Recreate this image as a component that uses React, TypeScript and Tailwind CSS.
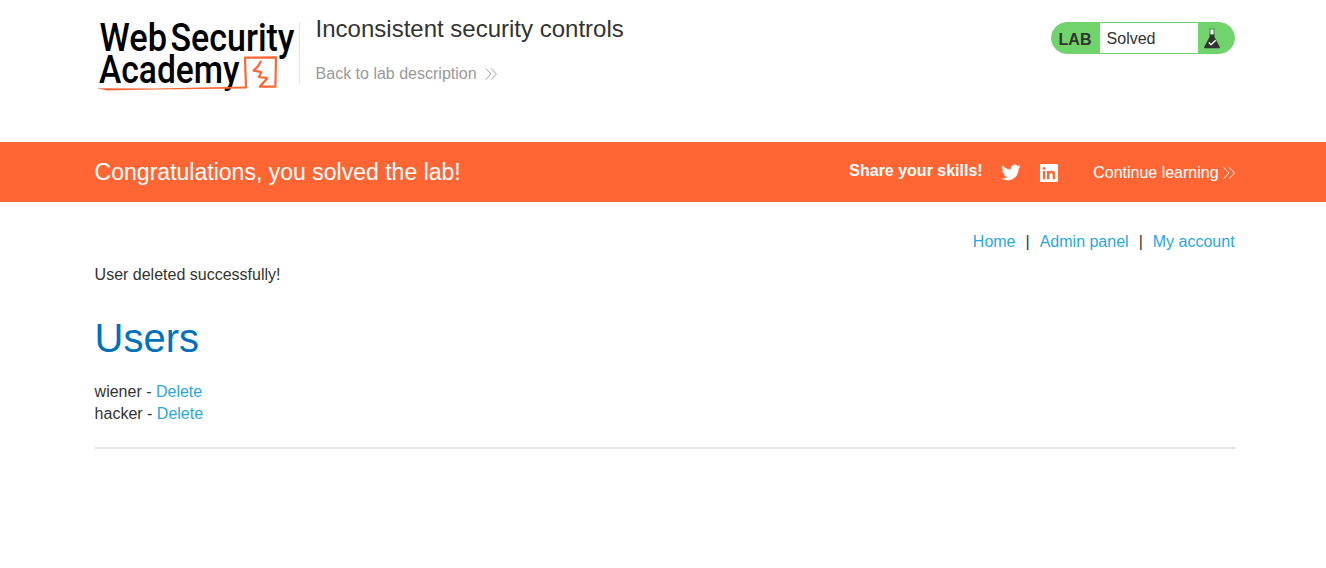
import type { ReactNode } from "react";

function Chevrons({ className = "" }: { className?: string }) {
  return (
    <svg viewBox="0 0 12 12" className={"h-3 w-3 shrink-0 " + className} fill="none" stroke="currentColor" strokeWidth="0.9">
      <path d="M0.6 0.3 6 6 0.6 11.7M6 0.3 11.4 6 6 11.7" />
    </svg>
  );
}

function Logo() {
  return (
    <svg viewBox="0 0 204 76" className="h-[76px] w-[204px] shrink-0 overflow-visible" aria-label="Web Security Academy">
      <g fill="#000" fontFamily="Roboto, sans-serif" fontSize="38" fontWeight="500">
        <text x="4.5" y="33" textLength="67.5" lengthAdjust="spacingAndGlyphs">Web</text>
        <text x="75.5" y="33" textLength="124" lengthAdjust="spacingAndGlyphs">Security</text>
        <text x="4" y="65" textLength="140.5" lengthAdjust="spacingAndGlyphs">Academy</text>
      </g>
      <path d="M1.5 70.2 60 70.4 151 68.4V70.4L60 71.6 12 72.6z" fill="#ff6633" />
      <path
        d="M151 69.4 150 39.6 181 39.4 180.4 68.6 164.8 68.7 172.3 60.2 163.9 59 166.3 54.2 158.6 52.6 163.6 47.6 165.7 43.6"
        fill="none" stroke="#ff6633" strokeWidth="2.2" strokeLinejoin="round" strokeLinecap="round"
      />
    </svg>
  );
}

function Link({ children }: { children: ReactNode }) {
  return <a href="#" className="text-[#29a7df]">{children}</a>;
}

function LabStatus() {
  return (
    <div className="mt-[22px] flex h-8 w-[184px] shrink-0 overflow-hidden rounded-full border border-[#70d36c] bg-[#70d36c]">
      <b className="w-12 pl-[7px] leading-[33px]">LAB</b>
      <span className="w-[98px] bg-white pl-[7px] leading-8">Solved</span>
      <svg viewBox="0 0 18 22" className="mt-[5px] ml-[5px] h-[22px] w-[18px]">
        <path d="M7.4 1.6h3.2v5H7.4z" fill="#fff" />
        <path d="M6.2 1h5.6M7 1.5v6M11 1.5v6" stroke="#333332" strokeWidth="0.5" fill="none" />
        <path d="M6.6 6.5h4.8v2.2l5.4 10.2q.5 1.4-1 1.4H2.2q-1.5 0-1-1.4L6.6 8.7z" fill="#333332" />
        <path d="m5.8 14.6 2.2 2.2 4.7-4.6" fill="none" stroke="#fff" strokeWidth="1.4" />
      </svg>
    </div>
  );
}

export default function App() {
  return (
    <div className="min-h-[568px] bg-white font-['Liberation_Sans',Arial,sans-serif] text-base leading-[22px] text-[#333332]">
      <header className="ml-[94.6px] flex h-[142px] w-[1140px]">
        <div className="mt-[18px]"><Logo /></div>
        <div className="mt-[22px] h-[62px] w-px bg-[#e6e6e6]" />
        <div className="ml-4 flex-1">
          <h1 className="mt-[15px] text-2xl leading-7">Inconsistent security controls</h1>
          <a href="#" className="mt-[20px] flex items-center text-[#999]">
            Back to lab description <Chevrons className="ml-2" />
          </a>
        </div>
        <LabStatus />
      </header>

      <section className="h-[60px] bg-[#ff6633] text-white">
        <div className="ml-[94.6px] flex h-full w-[1140px] items-center">
          <h2 className="flex-1 text-[23.04px] leading-7">Congratulations, you solved the lab!</h2>
          <b className="-mt-0.5">Share your skills!</b>
          <svg viewBox="0 0 24 24" className="ml-[17px] -mt-px h-[22px] w-[22px]" fill="currentColor">
            <path d="M22.46 6c-.77.35-1.6.58-2.46.69.88-.53 1.56-1.37 1.88-2.38-.83.5-1.75.85-2.72 1.05A4.28 4.28 0 0 0 11.87 9.3 12.1 12.1 0 0 1 3.05 4.9a4.28 4.28 0 0 0 1.33 5.71 4.2 4.2 0 0 1-1.94-.54v.05a4.28 4.28 0 0 0 3.43 4.2 4.3 4.3 0 0 1-1.93.07 4.28 4.28 0 0 0 4 2.97A8.6 8.6 0 0 1 1.54 19.13a12.1 12.1 0 0 0 6.56 1.92c7.88 0 12.2-6.54 12.2-12.2l-.01-.56A8.7 8.7 0 0 0 22.46 6z" />
          </svg>
          <svg viewBox="0 0 18 18" className="ml-[18px] mt-px h-[18px] w-[18px]">
            <rect width="18" height="18" rx="1" fill="currentColor" />
            <circle cx="4.1" cy="4.4" r="1.4" fill="#ff6633" />
            <path d="M2.9 7h2.4v8.3H2.9zM7 7h2.3v1.2c.5-.9 1.4-1.4 2.6-1.4 2.5 0 3.3 1.5 3.3 3.8v4.7h-2.4v-4.1c0-1.2-.2-2.3-1.6-2.3S9.4 10 9.4 11.2v4.1H7z" fill="#ff6633" />
          </svg>
          <a href="#" className="ml-[35.5px] mt-0.5 flex items-center">
            Continue learning <Chevrons className="ml-1" />
          </a>
        </div>
      </section>

      <main className="ml-[94.6px] w-[1140px] pt-[29px]">
        <nav className="flex justify-end">
          <Link>Home</Link>
          <span className="mx-[10px]">|</span>
          <Link>Admin panel</Link>
          <span className="mx-[10px]">|</span>
          <Link>My account</Link>
        </nav>
        <p className="mt-[11px]">User deleted successfully!</p>
        <h1 className="mt-[29px] text-[40px] leading-[46px] text-[#0071bc]">Users</h1>
        <div className="mt-[20px]">
          <p>wiener - <Link>Delete</Link></p>
          <p>hacker - <Link>Delete</Link></p>
        </div>
        <hr className="mt-[22px] border-0 border-t-2 border-[#e4e4e4]" />
      </main>
    </div>
  );
}
